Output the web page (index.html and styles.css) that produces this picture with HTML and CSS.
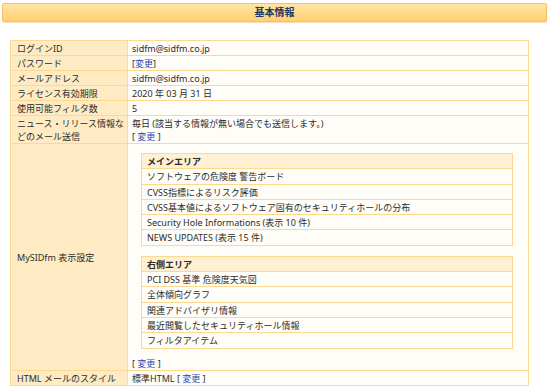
FILE: index.html
```html
<!DOCTYPE html>
<html lang="ja">
<head>
  <meta charset="UTF-8" />
  <title>基本情報</title>
  <link rel="stylesheet" href="styles.css">
</head>
<body>
  <div class="page">
    <div class="title-bar">基本情報</div>

    <table class="info">
      <tr>
        <th>ログインID</th>
        <td>sidfm@sidfm.co.jp</td>
      </tr>
      <tr>
        <th>パスワード</th>
        <td>[<a href="#">変更</a>]</td>
      </tr>
      <tr>
        <th>メールアドレス</th>
        <td>sidfm@sidfm.co.jp</td>
      </tr>
      <tr>
        <th>ライセンス有効期限</th>
        <td>2020 年 03 月 31 日</td>
      </tr>
      <tr>
        <th>使用可能フィルタ数</th>
        <td>5</td>
      </tr>
      <tr>
        <th>ニュース・リリース情報な<br>どのメール送信</th>
        <td>毎日 (該当する情報が無い場合でも送信します。)<br>[ <a href="#">変更</a> ]</td>
      </tr>
      <tr>
        <th class="mid">MySIDfm 表示設定</th>
        <td class="layout">
          <table class="area">
            <tr><th>メインエリア</th></tr>
            <tr><td>ソフトウェアの危険度 警告ボード</td></tr>
            <tr><td>CVSS指標によるリスク評価</td></tr>
            <tr><td>CVSS基本値によるソフトウェア固有のセキュリティホールの分布</td></tr>
            <tr><td>Security Hole Informations (表示 10 件)</td></tr>
            <tr><td>NEWS UPDATES (表示 15 件)</td></tr>
          </table>
          <table class="area">
            <tr><th>右側エリア</th></tr>
            <tr><td>PCI DSS 基準 危険度天気図</td></tr>
            <tr><td>全体傾向グラフ</td></tr>
            <tr><td>関連アドバイザリ情報</td></tr>
            <tr><td>最近閲覧したセキュリティホール情報</td></tr>
            <tr><td>フィルタアイテム</td></tr>
          </table>
          <div class="change">[ <a href="#">変更</a> ]</div>
        </td>
      </tr>
      <tr>
        <th>HTML メールのスタイル</th>
        <td>標準HTML [ <a href="#">変更</a> ]</td>
      </tr>
    </table>
  </div>
</body>
</html>
```

FILE: styles.css
```css
:root {
  --border: #fcd98f;
  --label-bg: #feebc4;
  --cell-bg: #fffdf7;
  --head-bg: #fff0d4;
  --text: #2b2b2b;
  --link: #2747b8;
}

body {
  margin: 0;
  font-family: "Noto Sans", "Noto Sans CJK JP", sans-serif;
  font-size: 9px;
  color: var(--text);
  background: #fff;
}

.page {
  padding: 3px 3px 0 2px;
}

.title-bar {
  height: 17px;
  line-height: 17px;
  text-align: center;
  font-size: 10px;
  font-weight: bold;
  color: #203764;
  background: linear-gradient(#ffe4a6, #ffcf74);
  border: 1px solid #f8c062;
  border-radius: 2px;
  box-shadow: 0 1px 1px rgba(240, 170, 60, 0.4);
}

a {
  color: var(--link);
  text-decoration: none;
}

table {
  border-collapse: collapse;
}

.info {
  margin: 18px 0 0 8px;
  width: 519px;
  table-layout: fixed;
}

.info th,
.info td {
  border: 1px solid var(--border);
  padding: 1px 4px 0;
  line-height: 13px;
  text-align: left;
  vertical-align: top;
  font-weight: normal;
  white-space: nowrap;
}

.info > tbody > tr > th {
  width: 110px;
  padding: 1px 0 0 6px;
  background: var(--label-bg);
}

.info > tbody > tr > td {
  background: var(--cell-bg);
}

.info th.mid {
  vertical-align: middle;
}

.info td.layout {
  padding-top: 9px;
}

.area {
  width: 372px;
  margin: 0 0 10px 9px;
}

.area + .area {
  margin-bottom: 8px;
}

.area th,
.area td {
  border: 1px solid var(--border);
  padding: 1px 5px 0;
  line-height: 13.3px;
  text-align: left;
}

.area th {
  font-weight: bold;
  background: var(--head-bg);
}

.area td {
  background: var(--cell-bg);
}

.change {
  padding: 0;
}
```
